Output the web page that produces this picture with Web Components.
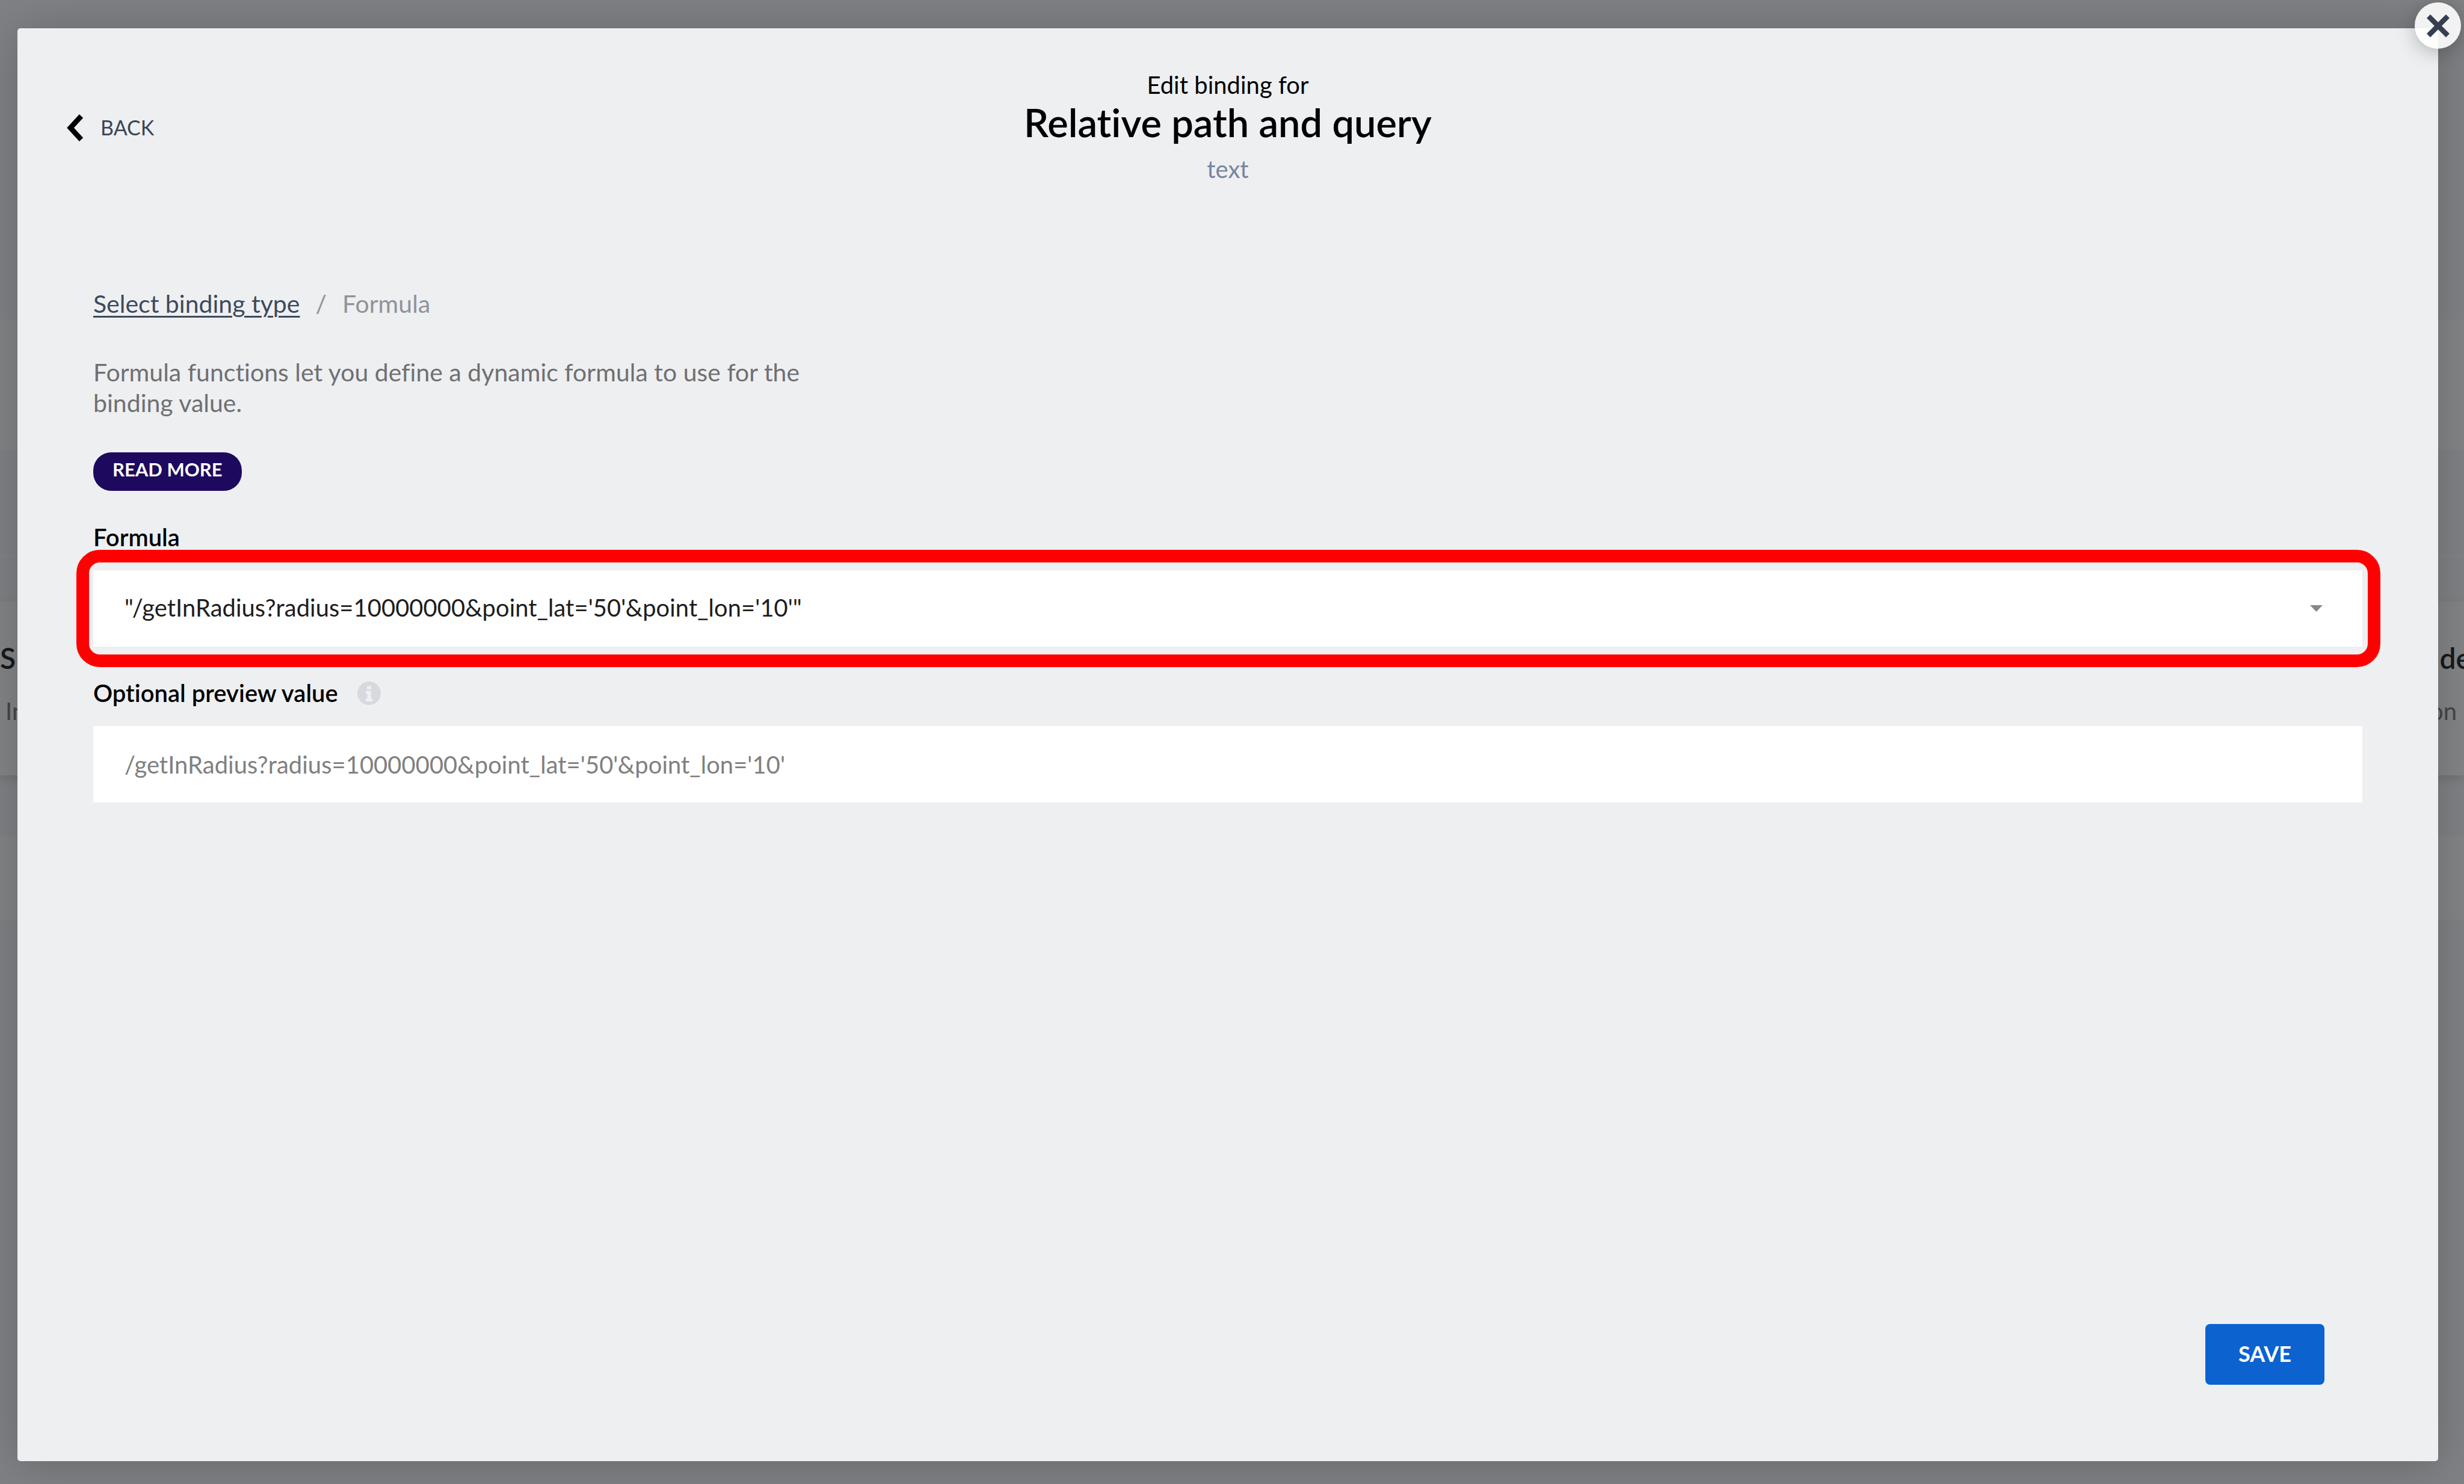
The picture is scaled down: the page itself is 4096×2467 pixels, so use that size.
<!DOCTYPE html>
<html lang="en">
<head>
<meta charset="utf-8">
<title>Edit binding</title>
<style>
  html, body { margin: 0; }
  body {
    position: relative;
    display: flex;
    min-height: 100vh;
    overflow: hidden;
    background: #7f8185;
    color: #000;
    font: 400 40px/48px Lato, "Open Sans", sans-serif;
    font-variant-ligatures: none;
  }
</style>
</head>
<body>
<page-backdrop></page-backdrop>
<modal-panel>
  <dialog-header slot="header" kind="text">
    <span slot="eyebrow">Edit binding for</span>
    Relative path and query
  </dialog-header>
  <crumb-trail parent="Select binding type" current="Formula"></crumb-trail>
  <help-note>Formula functions let you define a dynamic formula to use for the binding value.</help-note>
  <formula-field label="Formula" value="&quot;/getInRadius?radius=10000000&amp;point_lat='50'&amp;point_lon='10'&quot;"></formula-field>
  <preview-field label="Optional preview value" placeholder="/getInRadius?radius=10000000&amp;point_lat='50'&amp;point_lon='10'"></preview-field>
  <save-button slot="footer">SAVE</save-button>
</modal-panel>

<script>
const define = (name, html, setup) => {
  const tpl = document.createElement('template');
  tpl.innerHTML = html;
  customElements.define(name, class extends HTMLElement {
    constructor() {
      super();
      this.attachShadow({ mode: 'open' }).append(tpl.content.cloneNode(true));
    }
    connectedCallback() {
      if (setup) setup(this, s => this.shadowRoot.querySelector(s));
    }
  });
};

/* The dimmed page that lies behind the dialog */
define('page-backdrop', `
  <style>
    :host { position: absolute; inset: 0; display: flex; flex-direction: column; overflow: hidden; }
    .band { background: #838485; flex: none; }
    .top { margin-top: 531px; height: 217px; }
    .rule { margin-top: 175px; height: 2px; background: #838485; flex: none; }
    .card { margin-top: 75px; height: 289px; box-sizing: border-box; padding-top: 66px;
            display: flex; justify-content: space-between; box-shadow: 0 6px 16px rgba(0,0,0,.12); }
    .low { margin-top: 102px; height: 138px; }
    b { display: block; font-weight: 600; font-size: 48px; line-height: 56px; color: #17191b; }
    span { display: block; margin-top: 36px; color: #434546; }
    .left span { margin-left: 9px; }
    .right { text-align: right; }
    .right b { margin-right: -12px; }
    .right span { margin-right: 12px; }
  </style>
  <div class="band top"></div>
  <div class="rule"></div>
  <div class="band card">
    <div class="left"><b>S</b><span>In</span></div>
    <div class="right"><b>de</b><span>on</span></div>
  </div>
  <div class="band low"></div>
`);

define('modal-panel', `
  <style>
    :host { position: relative; flex: 1; margin: 47px 43px 38px 29px; display: flex; flex-direction: column;
            background: #eeeff1; border-radius: 5px; box-shadow: 0 4px 76px rgba(0,0,0,.2); }
    main { padding: 175px 126px 0; }
    footer { margin-top: auto; padding: 0 189px 127px; display: flex; justify-content: flex-end; }
    .close { position: absolute; top: -43px; right: -38px; width: 77px; height: 77px; padding: 0; border: 0;
             border-radius: 50%; background: rgba(255,255,255,.9); box-shadow: 0 6px 32px rgba(0,0,0,.25);
             display: grid; place-items: center; }
    svg { display: block; }
  </style>
  <button class="close" aria-label="Close">
    <svg width="38" height="38" viewBox="0 0 38 38"><path d="M3 3 35 35M35 3 3 35" stroke="#363e51" stroke-width="8.5" fill="none"/></svg>
  </button>
  <slot name="header"></slot>
  <main><slot></slot></main>
  <footer><slot name="footer"></slot></footer>
`);

define('dialog-header', `
  <style>
    :host { display: grid; grid-template-columns: 1fr auto 1fr; align-items: center; padding: 70px 82px 0; }
    button { justify-self: start; display: flex; align-items: center; gap: 28px; padding: 2px 0 0; border: 0;
             background: none; color: #3a4556; font: 400 34px/40px Lato, sans-serif; }
    svg { display: block; }
    .titles { text-align: center; }
    p, h1 { margin: 0; }
    h1 { font-weight: 600; font-size: 65px; line-height: 76px; }
    .kind { margin-top: 16px; color: #76859f; }
  </style>
  <button>
    <svg width="28" height="45" viewBox="0 0 28 45"><path d="M24 3 6 22.5 24 42" fill="none" stroke="#000" stroke-width="8.5"/></svg>
    BACK
  </button>
  <div class="titles">
    <p><slot name="eyebrow"></slot></p>
    <h1><slot></slot></h1>
    <p class="kind"></p>
  </div>
`, (el, $) => { $('.kind').textContent = el.getAttribute('kind'); });

define('crumb-trail', `
  <style>
    :host { display: block; font-size: 41px; line-height: 50px; color: #90939b; }
    nav { display: flex; gap: 26px; }
    a { color: #3d4a5c; text-decoration: underline; text-decoration-thickness: 3px; text-underline-offset: 5px; }
  </style>
  <nav><a href="#"></a><span>/</span><span class="current"></span></nav>
`, (el, $) => {
  $('a').textContent = el.getAttribute('parent');
  $('.current').textContent = el.getAttribute('current');
});

define('help-note', `
  <style>
    :host { display: block; margin-top: 63px; }
    p { margin: 0; max-width: 1240px; font-size: 41px; line-height: 51px; color: #6f7072; }
    button { display: block; box-sizing: border-box; margin-top: 57px; height: 64px; padding: 0 32px 8px;
             border: 0; border-radius: 30px; background: #1d0a5e; color: #fff; font: 700 31px/40px Lato, sans-serif; }
  </style>
  <p><slot></slot></p>
  <button>READ MORE</button>
`);

define('formula-field', `
  <style>
    :host { display: block; margin-top: 53px; }
    label { display: block; font-weight: 600; }
    .box { position: relative; margin-top: 31px; }
    select { display: block; box-sizing: border-box; width: 100%; height: 127px; padding: 0 120px 4px 52px;
             border: 0; border-radius: 0; background: #fff; color: #1e1e1e; appearance: none;
             font: 400 40px/48px Lato, sans-serif; }
    svg { position: absolute; right: 66px; top: 58px; pointer-events: none; }
    .ring { position: absolute; inset: -34px -30px -34px -28px; border: 21px solid #f00; border-radius: 39px; pointer-events: none; }
  </style>
  <label for="formula"></label>
  <div class="box">
    <select id="formula"><option></option></select>
    <svg width="21" height="11" viewBox="0 0 21 11"><path d="M0 0H21L10.5 11Z" fill="#848891"/></svg>
    <div class="ring"></div>
  </div>
`, (el, $) => {
  $('label').textContent = el.getAttribute('label');
  $('option').textContent = el.getAttribute('value');
});

define('preview-field', `
  <style>
    :host { display: block; margin-top: 53px; }
    .head { display: flex; align-items: center; gap: 32px; }
    label { font-weight: 600; }
    input { display: block; box-sizing: border-box; width: 100%; height: 127px; margin-top: 31px; padding: 0 52px;
            border: 0; background: #fff; font: 400 40px/48px Lato, sans-serif; }
    input::placeholder { color: #808080; opacity: 1; }
  </style>
  <div class="head">
    <label for="preview"></label>
    <svg width="39" height="39" viewBox="0 0 39 39" aria-hidden="true">
      <circle cx="19.5" cy="19.5" r="19.5" fill="#d7d9de"/>
      <path d="M16 7h7v6h-7zM14 15.5h9v13h2.5v4.500h-12v-4.500h3v-8.500h-2.500z" fill="#eeeff1"/>
    </svg>
  </div>
  <input id="preview" type="text">
`, (el, $) => {
  $('label').textContent = el.getAttribute('label');
  $('input').placeholder = el.getAttribute('placeholder');
});

define('save-button', `
  <style>
    :host { display: block; }
    button { width: 198px; height: 101px; padding: 0 0 4px; border: 0; border-radius: 8px; background: #0c62cf;
             color: #fff; font: 700 36px/44px Lato, sans-serif; }
  </style>
  <button><slot></slot></button>
`);
</script>
</body>
</html>
